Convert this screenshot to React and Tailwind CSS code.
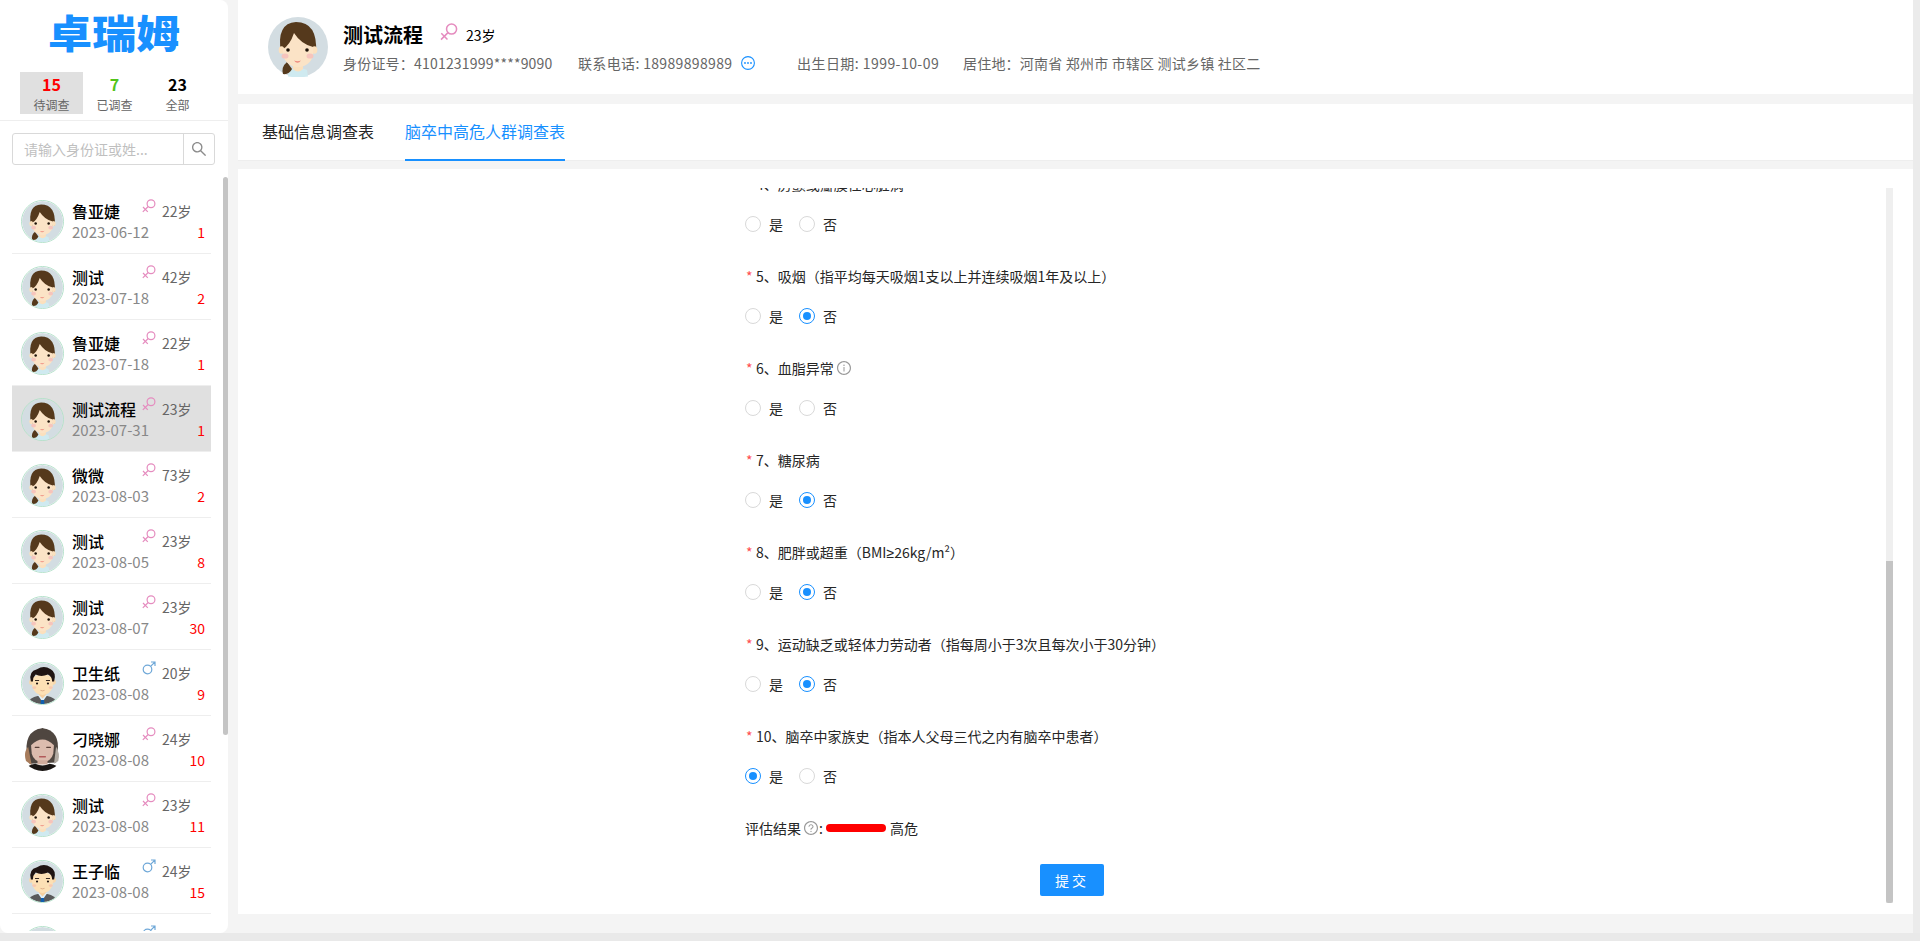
import React, { useEffect, useRef } from "react";
import { AiOutlineInfoCircle, AiOutlineQuestionCircle, AiOutlineSearch } from "react-icons/ai";

const FONT = "[font-family:'Noto_Sans_CJK_SC','Noto_Sans',sans-serif]";

function Female({ className }) {
  return (
    <svg viewBox="0 0 60 60" className={className}>
      <circle cx="30" cy="30" r="30" fill="#d3dde2" />
      <path d="M21 53 Q30 49 39 53 L40 59.500 Q30 61 20 59.500 Z" fill="#cfeaf0" />
      <path d="M25 40 h10 v12 q-5 5 -10 0 Z" fill="#fbe0bd" />
      <path d="M19 45 Q13 50 15 57 Q21 58 24 52 Z" fill="#55391c" />
      <path d="M13 36 Q8 6 28 5 Q50 5 48 36 Z" fill="#55391c" />
      <ellipse cx="13.500" cy="33" rx="2.800" ry="3.800" fill="#fbe0bd" />
      <ellipse cx="46.500" cy="33" rx="2.800" ry="3.800" fill="#fbe0bd" />
      <path d="M15 32 Q22 28 26 16 Q33 27 45 30 Q47 46 34 49.500 Q30 50.500 26 49.500 Q14 46 15 32 Z" fill="#fbe3c6" />
      <circle cx="20" cy="33" r="1.800" fill="#1d1208" />
      <circle cx="39" cy="33" r="1.800" fill="#1d1208" />
      <ellipse cx="17" cy="39" rx="3.500" ry="2.600" fill="#f6c4bc" />
      <ellipse cx="42" cy="39" rx="3.500" ry="2.600" fill="#f6c4bc" />
      <path d="M26 43.500 Q29.500 45 33 43.500 Q29.500 48 26 43.500 Z" fill="#ee8a7e" />
    </svg>
  );
}

function Male({ className }) {
  return (
    <svg viewBox="0 0 60 60" className={className}>
      <defs><clipPath id="mc"><circle cx="30" cy="30" r="30" /></clipPath></defs>
      <g clipPath="url(#mc)">
        <rect width="60" height="60" fill="#d3dde2" />
        <path d="M8 60 Q10 51 24 48 L36 48 Q50 51 52 60 Z" fill="#5a5a5a" />
        <path d="M23 47 L30 57 L37 47 Z" fill="#dff0fa" />
        <path d="M28 54 h4 l1 6 h-6 Z" fill="#0f5fb0" />
        <path d="M25 38 h10 v9 l-5 5 l-5 -5 Z" fill="#f5cf9f" />
        <ellipse cx="13.500" cy="28" rx="3" ry="4" fill="#f8d8ab" />
        <ellipse cx="46.500" cy="28" rx="3" ry="4" fill="#f8d8ab" />
        <path d="M14 22 Q30 12 46 22 L45 34 Q42 46 30 47 Q18 46 15 34 Z" fill="#fce0b5" />
        <path d="M13 27 Q9 12 22 9 Q32 3 42 9 Q51 14 47 27 L44 27 Q44 20 38 17 Q28 21 20 17 Q16 21 16 27 Z" fill="#1f1412" />
        <rect x="19" y="25" width="6" height="1.300" fill="#1f1412" />
        <rect x="35" y="25" width="6" height="1.300" fill="#1f1412" />
        <circle cx="22" cy="30" r="1.600" fill="#1f1412" />
        <circle cx="38" cy="30" r="1.600" fill="#1f1412" />
        <ellipse cx="18" cy="36" rx="3" ry="2" fill="#f8c8b0" />
        <ellipse cx="42" cy="36" rx="3" ry="2" fill="#f8c8b0" />
        <path d="M27 40 q3 1.500 6 0" stroke="#c98a6a" strokeWidth="0.800" fill="none" />
      </g>
    </svg>
  );
}

function Photo({ className }) {
  return (
    <svg viewBox="0 0 60 60" className={className}>
      <defs><clipPath id="pc"><circle cx="30" cy="30" r="30" /></clipPath></defs>
      <g clipPath="url(#pc)">
        <rect width="60" height="60" fill="#ffffff" />
        <path d="M9 42 Q2 4 30 0 Q55 4 51 34 L49 48 L12 50 Z" fill="#4f4640" />
        <path d="M7 46 Q3 34 10 26 L15 52 Z" fill="#a77c5c" />
        <path d="M49 26 Q55 36 52 46 L46 50 Z" fill="#b3aca4" />
        <path d="M14 24 Q30 8 46 24 L45 36 Q42 47 30 48 Q18 47 15 36 Z" fill="#dcbcae" />
        <rect x="19" y="26" width="7" height="1.800" rx="0.900" fill="#5a4038" />
        <rect x="35" y="26" width="7" height="1.800" rx="0.900" fill="#5a4038" />
        <rect x="25" y="39" width="10" height="2.200" rx="1.100" fill="#b25a5a" />
        <path d="M23 45 h14 v6 h-14 Z" fill="#d0ac9c" />
        <path d="M4 62 Q6 52 20 50 Q30 55 40 50 Q54 52 56 62 Z" fill="#1a1614" />
      </g>
    </svg>
  );
}

function GenderIcon({ male, className }) {
  if (male) {
    return (
      <svg viewBox="0 0 14 14" fill="none" stroke="#6fa8d8" strokeWidth="1.200" className={className}>
        <circle cx="5.500" cy="8.500" r="4.300" />
        <path d="M8.600 5.400 L13 1 M9 1 H13 V5" />
      </svg>
    );
  }
  return (
    <svg viewBox="0 0 14 14" fill="none" stroke="#e58cbf" strokeWidth="1.200" className={className}>
      <circle cx="9" cy="4.700" r="3.900" />
      <path d="M6.200 7.500 L0.800 12.900 M1 8 L5.800 12.800" />
    </svg>
  );
}

const people = [
  ["鲁亚婕", "F", 22, "2023-06-12", 1],
  ["测试", "F", 42, "2023-07-18", 2],
  ["鲁亚婕", "F", 22, "2023-07-18", 1],
  ["测试流程", "F", 23, "2023-07-31", 1],
  ["微微", "F", 73, "2023-08-03", 2],
  ["测试", "F", 23, "2023-08-05", 8],
  ["测试", "F", 23, "2023-08-07", 30],
  ["卫生纸", "M", 20, "2023-08-08", 9],
  ["刁晓娜", "P", 24, "2023-08-08", 10],
  ["测试", "F", 23, "2023-08-08", 11],
  ["王子临", "M", 24, "2023-08-08", 15],
  ["", "M", "", "", ""],
];

function PersonRow({ p, selected }) {
  const [name, kind, age, date, count] = p;
  const Av = kind === "M" ? Male : kind === "P" ? Photo : Female;
  return (
    <div className={`flex h-[66px] pl-[9px] pr-[6px] pt-[12px] border-b border-[#eeeeee] ${selected ? "bg-[#e0e0e0]" : ""}`}>
      {kind === "P" ? (
        <Av className="w-[43px] h-[43px] shrink-0" />
      ) : (
        <span className="w-[43px] h-[43px] shrink-0 rounded-full border border-[#b5e2cb] overflow-hidden">
          <Av className="w-full h-full" />
        </span>
      )}
      <div className="flex-1 ml-[8px] flex flex-col min-w-0">
        <div className="flex items-start h-[20px] mt-[1px]">
          <span className="w-[70px] text-[16px] leading-[20px] font-medium text-black whitespace-nowrap">{name}</span>
          <GenderIcon male={kind === "M"} className="w-[14px] h-[14px] -mt-[2px]" />
          {age !== "" && <span className="ml-[6px] text-[14px] leading-[20px] text-[#666666] whitespace-nowrap">{age}岁</span>}
        </div>
        <div className="flex items-center justify-between h-[20px] mt-[1px]">
          <span className="text-[15px] leading-[20px] text-[#888888]">{date}</span>
          <span className="text-[14px] leading-[20px] text-[#ff0000]">{count}</span>
        </div>
      </div>
    </div>
  );
}

function Radio({ checked, label }) {
  return (
    <span className="flex items-center">
      <span className={`w-[16px] h-[16px] rounded-full border flex items-center justify-center ${checked ? "border-[#1890ff]" : "border-[#d9d9d9]"}`}>
        {checked && <span className="w-[8px] h-[8px] rounded-full bg-[#1890ff]" />}
      </span>
      <span className="ml-[8px] w-[30px] text-[14px] leading-[22px] text-[#262626]">{label}</span>
    </span>
  );
}

function Question({ n, text, value, info }) {
  return (
    <div className="mb-[30px]">
      <div className="flex items-center h-[22px] text-[14px] text-[#262626] whitespace-nowrap">
        <span className="text-[#ff4d4f] w-[11px] pl-[1px] text-[14px]">*</span>
        <span>{n}、{text}</span>
        {info && <AiOutlineInfoCircle className="ml-[2px] w-[16px] h-[16px] text-[#999999]" />}
      </div>
      <div className="flex items-center h-[22px] mt-[18px]">
        <Radio checked={value === "yes"} label="是" />
        <Radio checked={value === "no"} label="否" />
      </div>
    </div>
  );
}

const questions = [
  [4, "房颤或瓣膜性心脏病", ""],
  [5, "吸烟（指平均每天吸烟1支以上并连续吸烟1年及以上）", "no"],
  [6, "血脂异常", "", true],
  [7, "糖尿病", "no"],
  [8, <>肥胖或超重（BMI<span className="[font-family:'Noto_Sans',sans-serif]">≥</span>26kg/m²）</>, "no"],
  [9, "运动缺乏或轻体力劳动者（指每周小于3次且每次小于30分钟）", "no"],
  [10, "脑卒中家族史（指本人父母三代之内有脑卒中患者）", "yes"],
];

export default function App() {
  const formRef = useRef(null);
  useEffect(() => {
    if (formRef.current) formRef.current.scrollTop = formRef.current.scrollHeight;
  }, []);
  return (
    <div className={`${FONT} w-full h-[941px] overflow-hidden flex flex-col bg-[#e9e9e9]`}>
      <div className="flex h-[933px]">
        <div className="flex-1 flex bg-[#f4f4f4] min-w-0">
          {/* sidebar */}
          <aside className="relative w-[228px] shrink-0 bg-white rounded-r-[8px] rounded-bl-[8px] flex flex-col overflow-hidden pb-[2px]">
            <div className="h-[72px] shrink-0 pb-[11px] flex items-center justify-center text-[44px] leading-none font-black text-[#1890ff] scale-y-[0.88]">卓瑞姆</div>
            <div className="h-[49px] shrink-0 pl-[20px] border-b border-[#eeeeee]">
              <div className="flex">
                <div className="w-[63px] h-[42px] bg-[#e0e0e0] flex flex-col items-center">
                  <span className="text-[16px] leading-[24px] font-bold text-[#ff0000]">15</span>
                  <span className="text-[12px] leading-[17px] text-[#666666]">待调查</span>
                </div>
                <div className="w-[63px] h-[42px] flex flex-col items-center">
                  <span className="text-[16px] leading-[24px] font-bold text-[#52c41a]">7</span>
                  <span className="text-[12px] leading-[17px] text-[#666666]">已调查</span>
                </div>
                <div className="w-[63px] h-[42px] flex flex-col items-center">
                  <span className="text-[16px] leading-[24px] font-bold text-black">23</span>
                  <span className="text-[12px] leading-[17px] text-[#666666]">全部</span>
                </div>
              </div>
            </div>
            <div className="h-[56px] shrink-0 pt-[12px] pl-[12px]">
              <div className="flex w-[203px] h-[32px] border border-[#d9d9d9] rounded-[3px]">
                <div className="flex-1 pl-[11px] text-[14px] leading-[30px] text-[#bfbfbf] whitespace-nowrap overflow-hidden">请输入身份证或姓...</div>
                <div className="w-[31px] border-l border-[#d9d9d9] flex items-center justify-center">
                  <AiOutlineSearch className="w-[18px] h-[18px] text-[#8c8c8c]" />
                </div>
              </div>
            </div>
            <div className="flex-1 min-h-0 overflow-hidden pl-[12px] pr-[17px] pt-[11px]">
              {people.map((p, i) => (
                <PersonRow key={i} p={p} selected={i === 3} />
              ))}
            </div>
            <div className="absolute right-0 top-[177px] w-[5px] h-[558px] rounded-[3px] bg-[#c4c4c4]" />
          </aside>
          {/* main */}
          <main className="flex-1 min-w-0 ml-[10px] flex flex-col">
            <header className="h-[94px] shrink-0 bg-white flex items-center pl-[30px]">
              <Female className="w-[60px] h-[60px] shrink-0" />
              <div className="ml-[15px]">
                <div className="flex items-center h-[28px]">
                  <span className="text-[20px] leading-[28px] font-bold text-black">测试流程</span>
                  <GenderIcon className="w-[18px] h-[18px] ml-[17px] -mt-[6px]" />
                  <span className="ml-[8px] text-[14px] text-black">23岁</span>
                </div>
                <div className="flex items-center text-[14px] tracking-[0.2px] text-[#666666] mt-[4px] leading-[20px] whitespace-nowrap">
                  <span className="w-[235px]">身份证号：4101231999****9090</span>
                  <span className="w-[163px] tracking-[0.35px]">联系电话: 18989898989</span>
                  <svg viewBox="0 0 14 14" fill="none" className="w-[14px] h-[14px]">
                    <circle cx="7" cy="7" r="6.400" stroke="#1890ff" strokeWidth="1.100" />
                    <circle cx="4" cy="7" r="0.900" fill="#1890ff" />
                    <circle cx="7" cy="7" r="0.900" fill="#1890ff" />
                    <circle cx="10" cy="7" r="0.900" fill="#1890ff" />
                  </svg>
                  <span className="ml-[42px] w-[166px] tracking-[0.45px]">出生日期: 1999-10-09</span>
                  <span>居住地：河南省 郑州市 市辖区 测试乡镇 社区二</span>
                </div>
              </div>
            </header>
            <nav className="h-[57px] mt-[10px] shrink-0 bg-white border-b border-[#eeeeee] flex pl-[24px] text-[16px]">
              <div className="h-[57px] leading-[54px] text-[#262626] whitespace-nowrap">基础信息调查表</div>
              <div className="ml-[31px] h-[57px] leading-[54px] text-[#1890ff] border-b-2 border-[#1890ff] whitespace-nowrap">脑卒中高危人群调查表</div>
            </nav>
            <section className="mt-[8px] h-[745px] shrink-0 bg-white pl-[20px] pr-[20px] pt-[19px] pb-[11px]">
              <div className="relative h-full">
                <div ref={formRef} className="h-full overflow-hidden pr-[7px]">
                  <div className="w-[654px] mx-auto pb-[7px] pt-[40px]">
                    {questions.map((q) => (
                      <Question key={q[0]} n={q[0]} text={q[1]} value={q[2]} info={q[3]} />
                    ))}
                    <div className="flex items-center h-[22px] text-[14px] text-[#262626] whitespace-nowrap">
                      评估结果
                      <AiOutlineQuestionCircle className="ml-[2px] w-[16px] h-[16px] text-[#999999]" />
                      :
                      <span className="ml-[3px] mr-[4px] w-[60px] h-[8px] rounded-full bg-[#ff0000]" />
                      高危
                    </div>
                    <div className="flex justify-center mt-[25px]">
                      <button className="w-[64px] h-[32px] rounded-[2px] bg-[#1890ff] text-white text-[14px] tracking-[3px]">提交</button>
                    </div>
                  </div>
                </div>
                <div className="absolute right-0 top-0 bottom-0 w-[7px] bg-[#efefef]">
                  <div className="absolute left-0 right-0 bottom-0 h-[342px] rounded-b-[2px] bg-[#c4c4c4]" />
                </div>
              </div>
            </section>
          </main>
        </div>
        <div className="w-[7px] shrink-0 bg-[#ebebeb]" />
      </div>
    </div>
  );
}
